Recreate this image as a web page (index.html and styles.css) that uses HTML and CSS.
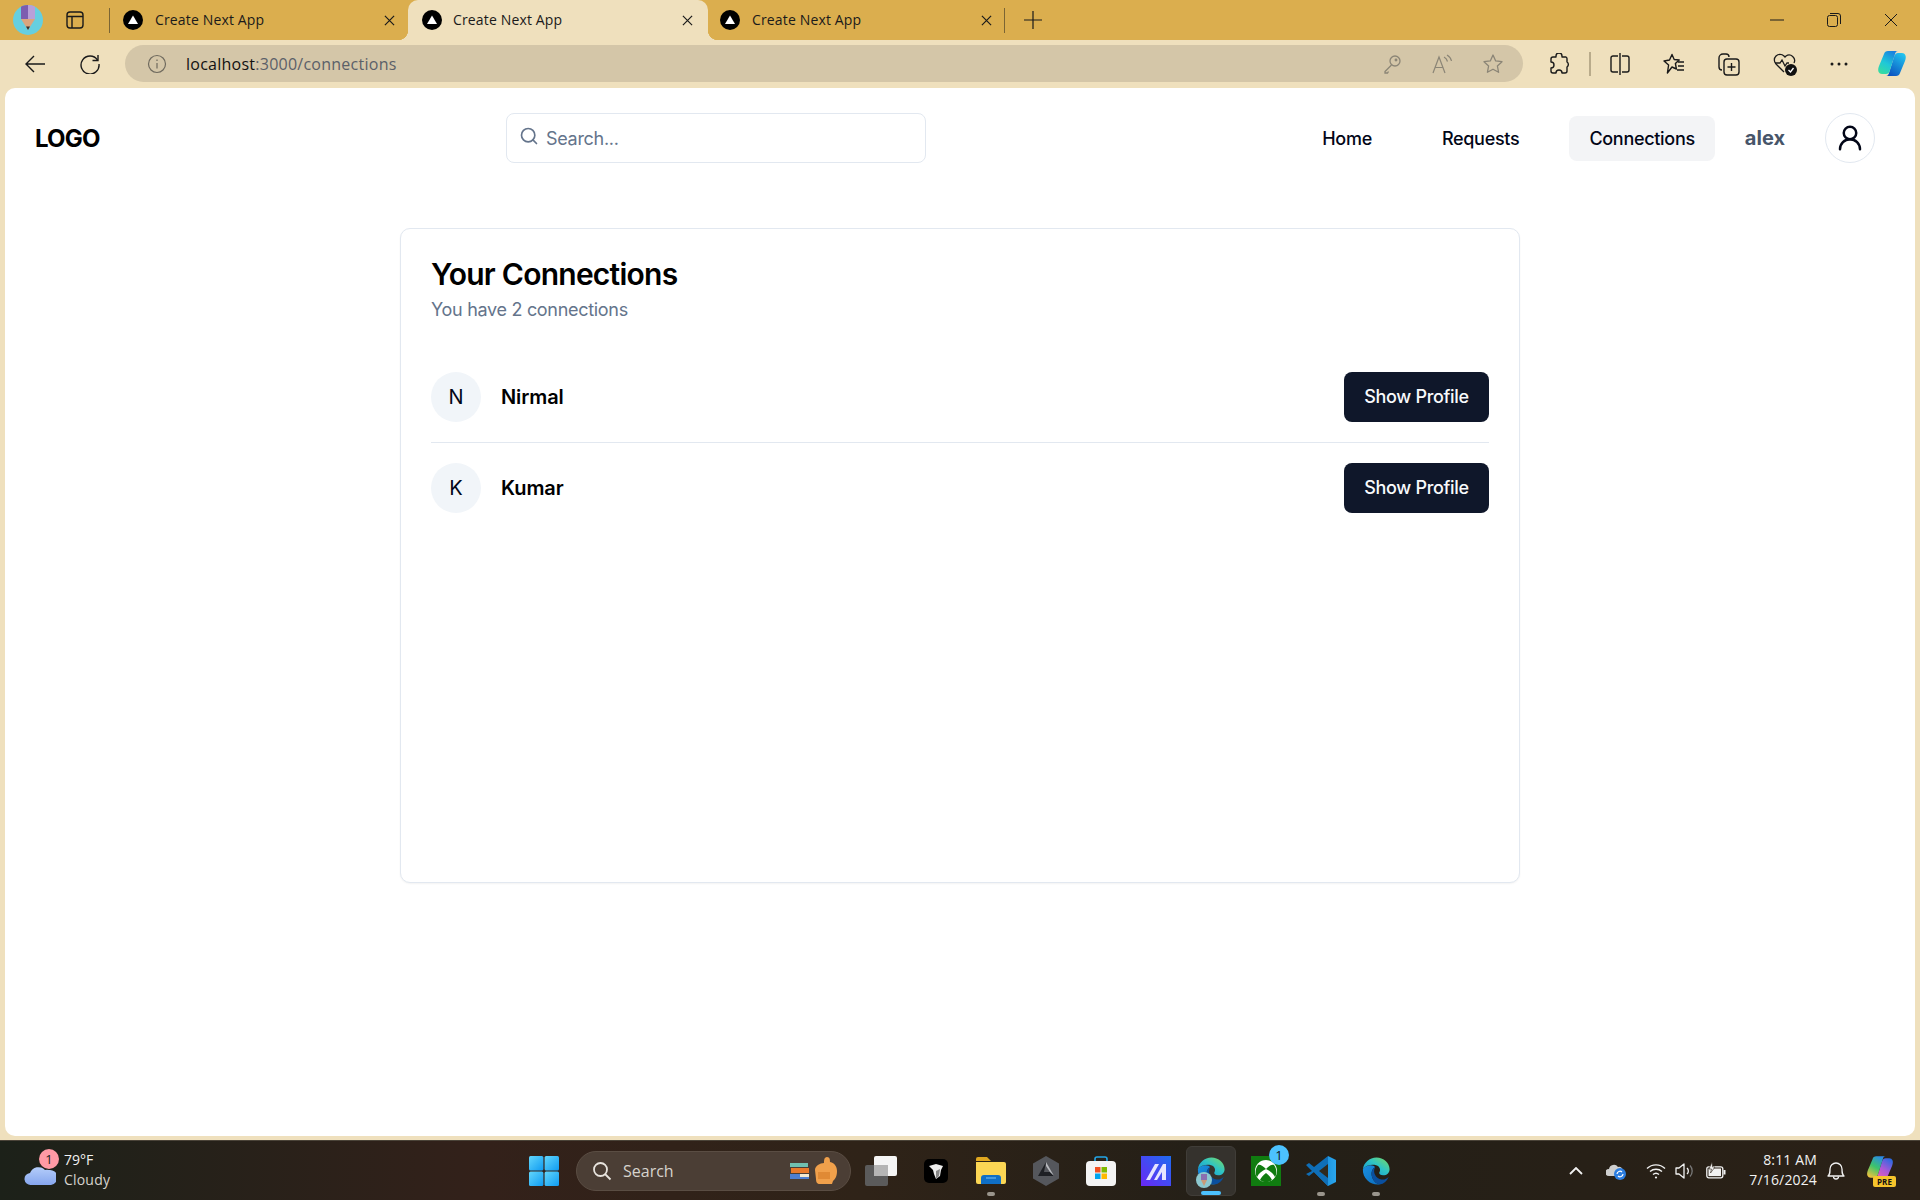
FILE: index.html
```html
<!DOCTYPE html>
<html lang="en">
<head>
<meta charset="UTF-8">
<meta name="viewport" content="width=device-width, initial-scale=1.0">
<title>Create Next App</title>
<link rel="stylesheet" href="styles.css">
</head>
<body>

<svg class="defs" width="0" height="0">
  <defs>
    <linearGradient id="edge-top" x1="0" y1="1" x2="1" y2="0">
      <stop offset="0" stop-color="#0f8fd8"/><stop offset="0.55" stop-color="#2fc4c4"/><stop offset="1" stop-color="#7ddb5e"/>
    </linearGradient>
    <linearGradient id="edge-left" x1="0" y1="0" x2="1" y2="1">
      <stop offset="0" stop-color="#1a8fe0"/><stop offset="1" stop-color="#0b6dbd"/>
    </linearGradient>
    <linearGradient id="copilot-left" x1="0.7" y1="0" x2="0.2" y2="1">
      <stop offset="0" stop-color="#1a7fe0"/><stop offset="0.55" stop-color="#1fc8d8"/><stop offset="1" stop-color="#37dca0"/>
    </linearGradient>
    <linearGradient id="copilot-right" x1="0.8" y1="0" x2="0.2" y2="1">
      <stop offset="0" stop-color="#22c4ee"/><stop offset="1" stop-color="#0a4fc0"/>
    </linearGradient>
    <linearGradient id="pre-left" x1="0.7" y1="0" x2="0.2" y2="1">
      <stop offset="0" stop-color="#2a8ae8"/><stop offset="0.5" stop-color="#3cc46b"/><stop offset="1" stop-color="#f2c23c"/>
    </linearGradient>
    <linearGradient id="pre-right" x1="0.8" y1="0" x2="0.2" y2="1">
      <stop offset="0" stop-color="#2a6ae0"/><stop offset="0.5" stop-color="#a858d8"/><stop offset="1" stop-color="#f060b0"/>
    </linearGradient>
    <linearGradient id="start-grad" x1="0" y1="0" x2="1" y2="1">
      <stop offset="0" stop-color="#62d6fb"/><stop offset="1" stop-color="#0f9bf2"/>
    </linearGradient>
    <linearGradient id="vs-grad" x1="0" y1="0" x2="1" y2="0">
      <stop offset="0" stop-color="#0f7fcc"/><stop offset="1" stop-color="#2aa6ee"/>
    </linearGradient>
    <linearGradient id="m-grad" x1="0" y1="1" x2="1" y2="0">
      <stop offset="0" stop-color="#6a27f5"/><stop offset="1" stop-color="#1e6cf0"/>
    </linearGradient>
    <linearGradient id="cloud-grad" x1="0" y1="0" x2="0" y2="1">
      <stop offset="0" stop-color="#b4cdfa"/><stop offset="1" stop-color="#86a6ee"/>
    </linearGradient>
    <clipPath id="profile-clip"><circle cx="15" cy="15" r="15"/></clipPath>
    <symbol id="favicon" viewBox="0 0 20 20">
      <circle cx="10" cy="10" r="10" fill="#000"/>
      <path d="M10 5.500 15 14H5z" fill="#fff"/>
    </symbol>
    <symbol id="close" viewBox="0 0 12 12">
      <path d="M1 1l10 10M11 1 1 11" fill="none" stroke="#1a1a1a" stroke-width="1.300"/>
    </symbol>
    <symbol id="edge" viewBox="0 0 32 32">
      <path d="M21 30C12 32 1.500 25 2 14 6 9 13 9 15 12c-4 2-5 8-2 13 2 4 6 5 8 5z" fill="url(#edge-left)"/>
      <path d="M2 14C3 7 9 1.500 16.500 1.500 24 1.500 30.500 7.500 30.500 14c0 4-3 6.500-7 6.500-2.500 0-4.500-1-4-2.800 1-1.700 1.500-3.700-.5-6.200C15 8 6 9 2 14z" fill="url(#edge-top)"/>
      <path d="M13 25c-3-5-2-11 2-13-3 6 1 12 7 13 3 .5 5.500-1 7.500-3-2 5-6 8-8.500 8-3 0-6-1-8-5z" fill="#0a4f9e"/>
    </symbol>
  </defs>
</svg>

<div class="tabstrip">
  <svg class="profile-pic" width="30" height="30" viewBox="0 0 30 30">
    <circle cx="15" cy="15" r="15" fill="#66cfe0"/>
    <g clip-path="url(#profile-clip)">
      <path d="M8 0h7v14H8z" fill="#7c5db0"/>
      <path d="M15 0h7v14h-7z" fill="#b9a0d8"/>
      <path d="M8 14h14l-7 11z" fill="#dba57e"/>
      <path d="M13 21.500h4L15 25z" fill="#333"/>
    </g>
  </svg>
  <svg class="sidebar-btn" width="18" height="18" viewBox="0 0 18 18" fill="none" stroke="#1a1a1a" stroke-width="1.400">
    <rect x="1" y="1" width="16" height="16" rx="3"/>
    <path d="M1 5.500h16M6 5.500V17"/>
  </svg>
  <div class="tab-sep"></div>
  <div class="tab tab-first">
    <svg class="fav" width="20" height="20"><use href="#favicon"/></svg>
    <span class="tab-title">Create Next App</span>
    <svg class="tab-close" width="11" height="11"><use href="#close"/></svg>
  </div>
  <div class="tab tab-active">
    <svg class="fav" width="20" height="20"><use href="#favicon"/></svg>
    <span class="tab-title">Create Next App</span>
    <svg class="tab-close" width="11" height="11"><use href="#close"/></svg>
  </div>
  <div class="tab tab-last">
    <svg class="fav" width="20" height="20"><use href="#favicon"/></svg>
    <span class="tab-title">Create Next App</span>
    <svg class="tab-close" width="11" height="11"><use href="#close"/></svg>
  </div>
  <div class="tab-sep"></div>
  <svg class="new-tab" width="18" height="18" viewBox="0 0 18 18"><path d="M9 0v18M0 9h18" stroke="#1a1a1a" stroke-width="1.200"/></svg>
  <div class="window-btns">
    <svg width="14" height="14" viewBox="0 0 14 14"><path d="M0 7h14" stroke="#1a1a1a" stroke-width="1"/></svg>
    <svg width="14" height="14" viewBox="0 0 14 14" fill="none" stroke="#1a1a1a"><rect x=".5" y="2.500" width="10" height="11" rx="2"/><path d="M3 .5h8a2.500 2.500 0 0 1 2.500 2.500v8"/></svg>
    <svg width="14" height="14" viewBox="0 0 14 14"><path d="M1 1l12 12M13 1 1 13" stroke="#1a1a1a" stroke-width="1"/></svg>
  </div>
</div>

<div class="toolbar">
  <svg class="nav-back" width="20" height="20" viewBox="0 0 20 20" fill="none" stroke="#1a1a1a" stroke-width="1.400"><path d="M20 10H1M9 2l-8 8 8 8"/></svg>
  <svg class="nav-reload" width="20" height="20" viewBox="0 0 20 20" fill="none" stroke="#1a1a1a" stroke-width="1.400"><path d="M17.500 6A9 9 0 1 0 19 10"/><path d="M18 1v5.500h-5.500"/></svg>
  <div class="address-bar">
    <svg class="info-icon" width="20" height="20" viewBox="0 0 20 20" fill="none" stroke="#6f6a5e" stroke-width="1.200"><circle cx="10" cy="10" r="8.500"/><path d="M10 9v5.500M10 5.500v1.500"/></svg>
    <span class="url"><span class="url-host">localhost</span>:3000/connections</span>
    <div class="address-icons">
      <svg width="20" height="20" viewBox="0 0 20 20" fill="none" stroke="#8b8576" stroke-width="1.300"><circle cx="13" cy="7" r="5"/><path d="M9.500 11 3 17.500V19h2.500l1-1.500"/><circle cx="14" cy="6" r=".8"/></svg>
      <svg width="22" height="20" viewBox="0 0 22 20" fill="none" stroke="#8b8576" stroke-width="1.200"><path d="M2 19 8 3l6 16M4 13.500h8"/><path d="M13 3c2 1 3 2.500 3.500 4.500M16 1c2.500 1.500 4 3.500 4.500 6"/></svg>
      <svg width="22" height="22" viewBox="0 0 22 22" fill="none" stroke="#8b8576" stroke-width="1.300"><path d="M11 2l2.700 5.900 6.300.8-4.600 4.300 1.200 6.300L11 16.200 5.400 19.300l1.200-6.300L2 8.700l6.300-.8z" stroke-linejoin="round"/></svg>
    </div>
  </div>
  <div class="tool-icons">
    <svg class="tool-ext" width="20" height="22" viewBox="0 0 20 22" fill="none" stroke="#1a1a1a" stroke-width="1.400"><path d="M7 3a3 3 0 0 1 6 0v1h4a2 2 0 0 1 1 2v3a3 3 0 0 1 0 5v4a2 2 0 0 1-2 2h-3a3 3 0 0 0-6 0H4a2 2 0 0 1-2-2v-3a3 3 0 0 0 0-6V6a2 2 0 0 1 2-2h3z" stroke-linejoin="round"/></svg>
    <div class="tool-sep"></div>
    <svg class="tool-split" width="20" height="22" viewBox="0 0 20 22" fill="none" stroke="#1a1a1a" stroke-width="1.400"><path d="M10 0v22M8 3H3a2 2 0 0 0-2 2v12a2 2 0 0 0 2 2h5M12 3h5a2 2 0 0 1 2 2v12a2 2 0 0 1-2 2h-5"/></svg>
    <svg width="22" height="22" viewBox="0 0 22 22" fill="none" stroke="#1a1a1a" stroke-width="1.400"><path d="M9 1.500l2.200 5 5 .5-3.800 3.500 1 5.500L9 14l-4.600 6 1.200-8L1 8l5.500-1z" stroke-linejoin="round"/><path d="M15 9h6M15 13h6M14 17h7"/></svg>
    <svg width="22" height="24" viewBox="0 0 22 24" fill="none" stroke="#1a1a1a" stroke-width="1.400"><path d="M4 18a3 3 0 0 1-3-3V6a4 4 0 0 1 4-4h3a3 3 0 0 1 3 3"/><rect x="6" y="7" width="15" height="16" rx="3"/><path d="M13.500 11v8M9.500 15h8"/></svg>
    <svg width="24" height="24" viewBox="0 0 24 24" fill="none" stroke="#1a1a1a" stroke-width="1.300"><path d="M11 20 3 12a5.500 5.500 0 0 1 8-8l1 1 1-1a5.500 5.500 0 0 1 8 7"/><path d="M2 11h5l2-3 3 6 2-3h2"/><circle cx="18" cy="18" r="6" fill="#111" stroke="none"/><path d="M15.500 18l2 2 3-4" stroke="#fff"/></svg>
    <svg width="18" height="4" viewBox="0 0 18 4" fill="#1a1a1a"><circle cx="2" cy="2" r="1.500"/><circle cx="9" cy="2" r="1.500"/><circle cx="16" cy="2" r="1.500"/></svg>
    <svg class="tool-copilot" width="30" height="27" viewBox="0 0 30 27">
      <path d="M19 26c2 0 3.500-1 4-3l5-12c2-5 0-8-3-8h-4c-2 0-3 1-4 4l-5 16c-.5 1.500-1 3-3 3z" fill="url(#copilot-right)"/>
      <path d="M11 1C9 1 7.500 2 7 4L2 16c-2 5 0 8 3 8h4c2 0 3-1 4-4l5-16c.5-1.500 1-3 3-3z" fill="url(#copilot-left)"/>
    </svg>
  </div>
</div>

<div class="page">
  <header class="site-nav">
    <div class="logo">LOGO</div>
    <div class="site-search">
      <svg class="site-search-icon" width="20" height="20" viewBox="0 0 24 24" fill="none" stroke="#64748b" stroke-width="2" stroke-linecap="round"><circle cx="11" cy="11" r="8"/><path d="m21 21-4.300-4.300"/></svg>
      <input type="text" placeholder="Search...">
    </div>
    <nav class="site-links">
      <a class="site-link">Home</a>
      <a class="site-link">Requests</a>
      <a class="site-link site-link-active">Connections</a>
    </nav>
    <span class="username">alex</span>
    <div class="user-btn">
      <svg width="30" height="30" viewBox="0 0 24 24" fill="none" stroke="#020617" stroke-width="2" stroke-linecap="round"><circle cx="12" cy="8" r="5"/><path d="M20 21a8 8 0 0 0-16 0"/></svg>
    </div>
  </header>

  <main class="card">
    <h1 class="card-title">Your Connections</h1>
    <p class="card-sub">You have 2 connections</p>
    <div class="conn-list">
      <div class="conn-row">
        <div class="avatar">N</div>
        <span class="conn-name">Nirmal</span>
        <button class="show-btn">Show Profile</button>
      </div>
      <div class="conn-row">
        <div class="avatar">K</div>
        <span class="conn-name">Kumar</span>
        <button class="show-btn">Show Profile</button>
      </div>
    </div>
  </main>
</div>

<footer class="taskbar">
  <div class="weather">
    <div class="weather-icon">
      <svg width="32" height="24" viewBox="0 0 32 24"><path d="M7 23a6 6 0 0 1-1-12 9 9 0 0 1 15-3 6.500 6.500 0 0 1 4 0 7 7 0 0 1 2 15z" fill="url(#cloud-grad)"/></svg>
      <span class="weather-badge">1</span>
    </div>
    <div class="weather-text">
      <div class="weather-temp">79°F</div>
      <div class="weather-desc">Cloudy</div>
    </div>
  </div>

  <div class="task-center">
    <svg class="task-start" width="30" height="30" viewBox="0 0 30 30" fill="url(#start-grad)"><rect width="14.400" height="14.400" rx="1.500"/><rect x="15.600" width="14.400" height="14.400" rx="1.500"/><rect y="15.600" width="14.400" height="14.400" rx="1.500"/><rect x="15.600" y="15.600" width="14.400" height="14.400" rx="1.500"/></svg>
    <div class="task-search">
      <svg width="20" height="20" viewBox="0 0 20 20" fill="none" stroke="#e8e4de" stroke-width="1.800"><circle cx="8.500" cy="8.500" r="6.500"/><path d="M13 13l5.500 5.500"/></svg>
      <span class="task-search-text">Search</span>
      <svg class="task-books" width="20" height="16" viewBox="0 0 20 16"><rect y="0" width="18" height="4" fill="#6fc0b0"/><rect x="1" y="5" width="18" height="5" fill="#e9792a"/><rect y="11" width="19" height="5" fill="#4f7fd0"/><rect x="10" y="11" width="9" height="3" fill="#f2e8d0"/></svg>
      <svg width="24" height="28" viewBox="0 0 24 28"><path d="M13 0c3 0 3 3 3 5 5 1 7 5 7 9 0 6-2 8-4 10l-1 3H6c-3 0-4-2-4-5l-1-9c0-4 5-7 9-7 0-2 0-6 3-6z" fill="#f0a04b"/><path d="M4 15h12v7H4z" fill="#e08a35"/></svg>
    </div>
    <div class="task-icons">
      <div class="task-icon">
        <svg width="32" height="30" viewBox="0 0 32 30"><rect x="0" y="9" width="23" height="21" rx="2" fill="#5b5b5b"/><rect x="9" y="0" width="23" height="20" rx="2" fill="#f5f5f5"/><rect x="9" y="9" width="14" height="11" fill="#b5b5b5"/></svg>
      </div>
      <div class="task-icon">
        <svg width="24" height="24" viewBox="0 0 24 24"><rect width="24" height="24" rx="5" fill="#000"/><path d="M5 7l7-2 7 2-2 4-1 6-4 3-2-5-1-4z" fill="#eee"/><path d="M12 12l4-2-1 7-3 3z" fill="#888"/></svg>
      </div>
      <div class="task-icon task-open">
        <svg width="30" height="27" viewBox="0 0 30 27"><path d="M0 2a2 2 0 0 1 2-2h9l4 4H0z" fill="#e0a820"/><path d="M0 5h28a2 2 0 0 1 2 2v18a2 2 0 0 1-2 2H2a2 2 0 0 1-2-2z" fill="#fbd654"/><path d="M5 27v-6a3 3 0 0 1 3-3h14a3 3 0 0 1 3 3v6z" fill="#0f6fc6"/><path d="M10 21h10" stroke="#7cc4f5"/></svg>
      </div>
      <div class="task-icon">
        <svg width="26" height="30" viewBox="0 0 26 30"><path d="M13 0l13 7.500v15L13 30 0 22.500v-15z" fill="#55575c"/><path d="M13 6 5 20h16l-4-4H11z" fill="#1e2024"/><path d="M13 6l8 14-4-4-4-6z" fill="#b9bbbf"/></svg>
      </div>
      <div class="task-icon">
        <svg width="30" height="30" viewBox="0 0 30 30"><path d="M9 6V3a2 2 0 0 1 2-2h8a2 2 0 0 1 2 2v3" fill="none" stroke="#23a6e8" stroke-width="1.600"/><rect y="5" width="30" height="25" rx="4" fill="#f4f4f4"/><rect x="9" y="11" width="5.500" height="5.500" fill="#f25022"/><rect x="15.500" y="11" width="5.500" height="5.500" fill="#7fba00"/><rect x="9" y="17.500" width="5.500" height="5.500" fill="#00a4ef"/><rect x="15.500" y="17.500" width="5.500" height="5.500" fill="#ffb900"/></svg>
      </div>
      <div class="task-icon">
        <svg width="30" height="30" viewBox="0 0 30 30"><rect width="30" height="30" fill="url(#m-grad)"/><path d="M5 24 14 8h4L9 24zM13 24l9-16h3v16h-4v-8l-5 8z" fill="#e6e4ff"/></svg>
      </div>
      <div class="task-icon task-active">
        <svg width="30" height="30"><use href="#edge"/></svg>
        <svg class="edge-badge" width="16" height="16" viewBox="0 0 16 16"><circle cx="8" cy="8" r="8" fill="#8dc8cf"/><path d="M5 2h6v6H5z" fill="#8a6fb0"/><path d="M5 8h6l-3 6z" fill="#c99a78"/></svg>
      </div>
      <div class="task-icon">
        <svg width="30" height="30" viewBox="0 0 30 30"><rect width="30" height="30" fill="#107c10"/><circle cx="15" cy="15" r="11" fill="#fff"/><path d="M15 13C12 10 9 8 7 9c-3 4-3 9-1 12 2-4 5-6 9-8zM15 13c3-3 6-5 8-4 3 4 3 9 1 12-2-4-5-6-9-8zM15 17c-3 2-5 5-6 7 4 3 8 3 12 0-1-2-3-5-6-7z" fill="#107c10"/></svg>
        <span class="xbox-badge">1</span>
      </div>
      <div class="task-icon task-open">
        <svg width="30" height="30" viewBox="0 0 30 30"><path d="M22 0 30 4v22l-8 4L8 16l14-11z" fill="url(#vs-grad)"/><path d="M22 0v30L8 16l-5 4-3-2 6-3-6-6 3-2 5 4z" fill="#0f6fb8"/><path d="M22 8v14l-9-7z" fill="#2f2a1f"/></svg>
      </div>
      <div class="task-icon task-open">
        <svg width="30" height="30"><use href="#edge"/></svg>
      </div>
    </div>
  </div>

  <div class="tray">
    <svg class="tray-chevron" width="14" height="8" viewBox="0 0 14 8" fill="none" stroke="#f2f2f2" stroke-width="1.800"><path d="M1 7l6-6 6 6"/></svg>
    <svg class="tray-cloud" width="20" height="18" viewBox="0 0 20 18"><path d="M3 14a3.500 3.500 0 0 1 0-7 5 5 0 0 1 9-2 4 4 0 0 1 5 4v5z" fill="#cfcfcf"/><circle cx="14" cy="12" r="6" fill="#2b7de0"/><path d="M11 12a3 3 0 0 1 5-2M17 12a3 3 0 0 1-5 2" fill="none" stroke="#fff" stroke-width="1.200"/></svg>
    <svg class="tray-wifi" width="20" height="16" viewBox="0 0 20 16" fill="none" stroke="#f2f2f2" stroke-width="1.400"><path d="M1 5.500a13 13 0 0 1 18 0M4 8.500a9 9 0 0 1 12 0M7 11.500a4.500 4.500 0 0 1 6 0"/><circle cx="10" cy="14.500" r="1.100" fill="#f2f2f2" stroke="none"/></svg>
    <svg class="tray-sound" width="20" height="18" viewBox="0 0 20 18" fill="none" stroke="#f2f2f2" stroke-width="1.300"><path d="M1 6v6h3l5 4V2L4 6z" stroke-linejoin="round"/><path d="M12 6a4 4 0 0 1 0 6"/><path d="M15 3.500a8 8 0 0 1 0 11" stroke="#777"/></svg>
    <svg class="tray-battery" width="20" height="18" viewBox="0 0 20 18"><rect x=".8" y="4.800" width="16" height="11" rx="2" fill="none" stroke="#f2f2f2" stroke-width="1.300"/><rect x="2.500" y="6.500" width="12.500" height="7.600" fill="#f2f2f2"/><rect x="17.500" y="8" width="2" height="4.500" fill="#f2f2f2"/><path d="M6 0 3 7h2.500L4.500 11 9 5H6.500z" fill="#f2f2f2" stroke="#2b2117" stroke-width=".6"/></svg>
    <div class="clock">
      <div>8:11 AM</div>
      <div>7/16/2024</div>
    </div>
    <svg class="tray-bell" width="18" height="20" viewBox="0 0 18 20" fill="none" stroke="#f2f2f2" stroke-width="1.300"><path d="M1 15c2-2 2-3 2-7a6 6 0 0 1 12 0c0 4 0 5 2 7z" stroke-linejoin="round"/><path d="M6.500 15.500a2.500 2.500 0 0 0 5 0"/></svg>
    <div class="tray-copilot">
      <svg width="28" height="26" viewBox="0 0 30 27">
        <path d="M19 26c2 0 3.500-1 4-3l5-12c2-5 0-8-3-8h-4c-2 0-3 1-4 4l-5 16c-.5 1.500-1 3-3 3z" fill="url(#pre-right)"/>
        <path d="M11 1C9 1 7.500 2 7 4L2 16c-2 5 0 8 3 8h4c2 0 3-1 4-4l5-16c.5-1.500 1-3 3-3z" fill="url(#pre-left)"/>
      </svg>
      <span class="pre-badge">PRE</span>
    </div>
  </div>
</footer>

</body>
</html>
```

FILE: styles.css
```css
* {
  box-sizing: border-box;
}
html, body {
  margin: 0;
  height: 1200px;
  overflow: hidden;
}
body {
  display: flex;
  flex-direction: column;
  background-color: #efe0bd;
  font-family: 'Inter', sans-serif;
  color: #020617;
}
.defs {
  position: absolute;
}

/* browser tab strip */
.tabstrip {
  display: flex;
  align-items: center;
  height: 40px;
  flex-shrink: 0;
  background-color: #dbae4e;
  padding-left: 13px;
  font-family: 'Open Sans', sans-serif;
  font-size: 14px;
  color: #1a1a1a;
}
.profile-pic {
  flex-shrink: 0;
}
.sidebar-btn {
  margin-left: 23px;
  flex-shrink: 0;
}
.tab-sep {
  width: 1px;
  height: 25px;
  background-color: #7b6534;
  flex-shrink: 0;
}
.sidebar-btn + .tab-sep {
  margin-left: 25px;
}
.tab {
  display: flex;
  align-items: center;
  height: 40px;
  gap: 12px;
  position: relative;
}
.tab-first {
  width: 298px;
  padding: 0 13px;
}
.tab-active {
  width: 300px;
  padding: 0 15px 0 14px;
  gap: 11px;
  background-color: #efe0bd;
  border-radius: 10px 10px 0 0;
}
.tab-active::before, .tab-active::after {
  content: "";
  position: absolute;
  bottom: 0;
  width: 10px;
  height: 10px;
}
.tab-active::before {
  left: -10px;
  background: radial-gradient(circle at 0 0, transparent 10px, #efe0bd 10.500px);
}
.tab-active::after {
  right: -10px;
  background: radial-gradient(circle at 100% 0, transparent 10px, #efe0bd 10.500px);
}
.tab-last {
  width: 296px;
  padding: 0 12px;
}
.tab-title {
  flex: 1;
  padding-bottom: 2px;
  letter-spacing: 0.15px;
  white-space: nowrap;
}
.new-tab {
  margin-left: 19px;
}
.window-btns {
  display: flex;
  gap: 43px;
  margin-left: auto;
  padding-right: 22px;
}

/* address bar row */
.toolbar {
  display: flex;
  align-items: flex-start;
  height: 48px;
  flex-shrink: 0;
  padding-top: 5px;
  padding-left: 25px;
}
.nav-back {
  margin-top: 9px;
}
.nav-reload {
  margin-left: 35px;
  margin-top: 9px;
}
.address-bar {
  display: flex;
  align-items: center;
  width: 1398px;
  height: 37px;
  margin-left: 25px;
  padding-left: 22px;
  background-color: #d4c6a8;
  border-radius: 19px;
  font-family: 'Open Sans', sans-serif;
  font-size: 16px;
  color: #5b6068;
}
.url {
  margin-left: 19px;
  letter-spacing: 0.25px;
}
.url-host {
  color: #111;
}
.address-icons {
  display: flex;
  align-items: center;
  gap: 29px;
  margin-left: auto;
  padding-right: 19px;
}
.tool-icons {
  display: flex;
  align-items: center;
  gap: 33px;
  height: 37px;
  margin-left: 26px;
}
.tool-sep {
  width: 2px;
  height: 24px;
  margin: 0 -14px 0 -13px;
  background-color: #b9ab8b;
}
.tool-copilot {
  margin-left: -4px;
}

/* the web page */
.page {
  flex: 1;
  margin: 0 5px 4px;
  background-color: #fff;
  border-radius: 10px;
}
.site-nav {
  display: flex;
  align-items: center;
  height: 50px;
  margin-top: 25px;
  padding: 0 40px 0 30px;
}
.logo {
  width: 471px;
  font-size: 24px;
  font-weight: 700;
  letter-spacing: -0.8px;
  color: #000;
}
.site-search {
  display: flex;
  align-items: center;
  gap: 7px;
  width: 420px;
  height: 50px;
  padding-left: 12px;
  border: 1px solid #e2e8f0;
  border-radius: 8px;
}
.site-search-icon {
  margin-bottom: 5px;
}
.site-search input {
  flex: 1;
  min-width: 0;
  border: 0;
  outline: 0;
  padding: 0;
  font-family: 'Inter', sans-serif;
  font-size: 18px;
  letter-spacing: -0.3px;
}
.site-search input::placeholder {
  color: #64748b;
  opacity: 1;
}
.site-links {
  display: flex;
  gap: 30px;
  margin-left: auto;
}
.site-link {
  height: 45px;
  padding: 0 20px;
  border-radius: 8px;
  font-size: 18px;
  font-weight: 500;
  letter-spacing: -0.3px;
  line-height: 45px;
}
.site-link-active {
  background-color: #f3f4f6;
}
.username {
  margin-left: 30px;
  font-size: 20px;
  font-weight: 700;
  color: #475569;
}
.user-btn {
  display: flex;
  align-items: center;
  justify-content: center;
  width: 50px;
  height: 50px;
  margin-left: 40px;
  border: 1px solid #e2e8f0;
  border-radius: 50%;
}

.card {
  width: 1120px;
  height: 655px;
  margin: 65px auto 0;
  padding: 27px 30px 30px;
  background-color: #fff;
  border: 1px solid #e2e8f0;
  border-radius: 10px;
  box-shadow: 0 1px 2px rgba(0, 0, 0, 0.05);
}
.card-title {
  margin: 0;
  font-size: 30px;
  font-weight: 600;
  line-height: 36px;
  letter-spacing: -0.75px;
  color: #000;
}
.card-sub {
  margin: 4px 0 0;
  font-size: 18px;
  line-height: 27px;
  letter-spacing: -0.3px;
  color: #64748b;
}
.conn-list {
  margin-top: 29px;
}
.conn-row {
  display: flex;
  align-items: center;
  gap: 20px;
  padding: 20px 0;
  border-bottom: 1px solid #e2e8f0;
}
.conn-row:last-child {
  border-bottom: 0;
}
.avatar {
  display: flex;
  align-items: center;
  justify-content: center;
  width: 50px;
  height: 50px;
  background-color: #f1f5f9;
  border-radius: 50%;
  font-size: 20px;
}
.conn-name {
  font-size: 20px;
  font-weight: 600;
  letter-spacing: -0.1px;
  color: #000;
}
.show-btn {
  width: 145px;
  height: 50px;
  margin-left: auto;
  padding-bottom: 2px;
  border: 0;
  border-radius: 8px;
  background-color: #0f172a;
  color: #f8fafc;
  font-family: 'Inter', sans-serif;
  font-size: 18px;
  font-weight: 500;
  letter-spacing: -0.3px;
}

/* windows taskbar */
.taskbar {
  display: flex;
  align-items: center;
  height: 60px;
  flex-shrink: 0;
  background: linear-gradient(90deg, #1c2119 0, #33211a 25%, #2f2318 45%, #231f17 65%, #2b2117 100%);
  border-top: 1px solid #4a4338;
  font-family: 'Open Sans', sans-serif;
  color: #f2f2f2;
}
.weather {
  display: flex;
  align-items: center;
  gap: 8px;
  width: 529px;
  padding-left: 24px;
}
.weather-icon {
  position: relative;
  width: 32px;
  height: 24px;
  margin-top: 6px;
}
.weather-badge {
  position: absolute;
  top: -13px;
  left: 15px;
  width: 20px;
  height: 20px;
  background-color: #ff9aa5;
  border-radius: 50%;
  color: #222;
  font-size: 13px;
  line-height: 20px;
  text-align: center;
}
.weather-text {
  margin-bottom: 2px;
  font-size: 14px;
  line-height: 20px;
}
.weather-desc {
  color: #d6d3cd;
  letter-spacing: 0.2px;
}
.task-center {
  display: flex;
  align-items: center;
}
.task-search {
  display: flex;
  align-items: center;
  width: 275px;
  height: 40px;
  margin-left: 17px;
  padding: 0 12px 0 15px;
  background-color: #4b3e35;
  border: 1px solid #5a4d43;
  border-radius: 20px;
}
.task-search-text {
  flex: 1;
  margin-left: 11px;
  font-size: 16px;
  color: #d6d3cd;
}
.task-books {
  margin-right: 4px;
}
.task-icons {
  display: flex;
  align-items: center;
  gap: 5px;
  margin-left: 5px;
}
.task-icon {
  position: relative;
  display: flex;
  align-items: center;
  justify-content: center;
  width: 50px;
  height: 50px;
  border-radius: 6px;
}
.task-open::after, .task-active::after {
  content: "";
  position: absolute;
  bottom: 0;
  left: 50%;
  width: 8px;
  height: 4px;
  margin-left: -4px;
  background-color: #9a958c;
  border-radius: 2px;
}
.task-active {
  background-color: #35322d;
  border: 1px solid #403d38;
}
.task-active::after {
  width: 20px;
  margin-left: -10px;
  background-color: #4cc2ff;
}
.edge-badge {
  position: absolute;
  left: 9px;
  bottom: 7px;
}
.xbox-badge {
  position: absolute;
  top: -1px;
  right: 2px;
  width: 20px;
  height: 20px;
  background-color: #4cc2ff;
  border-radius: 50%;
  color: #111;
  font-size: 13px;
  line-height: 20px;
  text-align: center;
}
.tray {
  display: flex;
  align-items: center;
  margin-left: auto;
  padding-right: 24px;
}
.tray-cloud {
  margin-left: 23px;
}
.tray-wifi {
  margin-left: 20px;
}
.tray-sound {
  margin-left: 9px;
}
.tray-battery {
  margin-left: 11px;
}
.clock {
  width: 91px;
  margin-bottom: 2px;
  font-size: 14px;
  letter-spacing: 0.15px;
  line-height: 20px;
  text-align: right;
}
.tray-bell {
  margin-left: 10px;
}
.tray-copilot {
  position: relative;
  width: 30px;
  height: 32px;
  margin-left: 21px;
}
.pre-badge {
  position: absolute;
  left: 7px;
  bottom: 0;
  width: 23px;
  height: 11px;
  background-color: #f6c42c;
  border-radius: 2px;
  color: #111;
  font-size: 8px;
  font-weight: 700;
  line-height: 11px;
  text-align: center;
}
```
